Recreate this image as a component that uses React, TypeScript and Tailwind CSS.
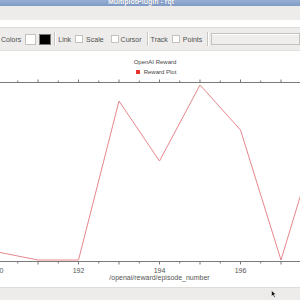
import React from "react";

const X0 = 78.5; // x of episode 192
const STEP = 40.5; // px per episode

const points: [number, number][] = [
  [190, 252],
  [191, 260],
  [192, 260],
  [193, 101],
  [194, 161],
  [195, 85],
  [196, 130],
  [197, 260],
  [198, 126],
];

const TOP = 77; // page y where the svg starts
const xOf = (v: number) => X0 + (v - 192) * STEP;

const Check = ({ className = "" }: { className?: string }) => (
  <span className={"w-[8px] h-[8px] bg-white border border-[#c4c2bf] shrink-0 " + className} />
);
const Sep = ({ className = "" }: { className?: string }) => (
  <span className={"w-[2px] h-[14px] border-l border-[#c9c7c3] border-r border-r-white shrink-0 " + className} />
);

export default function App() {
  const ticks: number[] = [];
  for (let i = -1; i < 17; i++) ticks.push(X0 + (i - 4) * (STEP / 2));
  const path = points.map(([v, y]) => `${xOf(v)},${y - TOP}`).join(" ");

  return (
    <div className="w-[300px] h-[300px] overflow-hidden bg-[#edecea] flex flex-col font-['Liberation_Sans',sans-serif] text-[#505050]">
      <div className="h-[6px] shrink-0 overflow-hidden bg-gradient-to-b from-[#98afd4] to-[#7f9ac6] flex justify-center">
        <span className="-mt-[3px] ml-[-18px] text-[7px] leading-[9px] font-bold text-white [text-shadow:0_0_1px_#4a5f88]">
          MultiplotPlugin - rqt
        </span>
      </div>
      <div className="h-[14px] shrink-0" />
      <div className="h-[7px] shrink-0 bg-white" />
      <div className="h-[23px] shrink-0 border-t border-[#dcdad6] flex items-center pl-[1px] text-[7px] leading-none">
        <span>Colors</span>
        <span className="ml-[4px] w-[11px] h-[11px] bg-white border border-[#c4c2bf] shrink-0" />
        <span className="ml-[3px] w-[12px] h-[11px] bg-black border border-[#777] shrink-0" />
        <Sep className="ml-[3px]" />
        <span className="ml-[2px]">Link</span>
        <Check className="ml-[4px]" />
        <span className="ml-[3px]">Scale</span>
        <Check className="ml-[7px]" />
        <span className="ml-[2px]">Cursor</span>
        <Sep className="ml-[5px]" />
        <span className="ml-[2px]">Track</span>
        <Check className="ml-[4px]" />
        <span className="ml-[3px]">Points</span>
        <Sep className="ml-[5px]" />
        <span className="ml-[2px] flex-1 h-[12px] border border-[#c4c2bf] bg-[#efeeec] shadow-[inset_0_1px_0_#fff]" />
      </div>
      <div className="h-[237px] shrink-0 bg-white border-t border-[#e2e0dc] flex flex-col">
        <div className="mt-[6px] h-[10px] flex items-center justify-center text-[6px] text-[#444] pl-[10px]">
          OpenAI Reward
        </div>
        <div className="h-[10px] flex items-center justify-center gap-[4px] text-[6px] text-[#444] pl-[12px]">
          <span className="w-[4px] h-[4px] bg-[#e8352c]" />
          <span>Reward Plot</span>
        </div>
        <svg width="300" height="210" className="shrink-0">
          <line x1="0" y1="5.5" x2="300" y2="5.5" stroke="#7a7a7a" strokeWidth="1" />
          {ticks.map((x, i) => (
            <line key={"t" + i} x1={x} y1={i % 2 ? 2.5 : 3.5} x2={x} y2="5.5" stroke="#7a7a7a" strokeWidth="1" />
          ))}
          <polyline points={path} fill="none" stroke="#e6868c" strokeWidth="1" />
          <line x1="0" y1="184.5" x2="300" y2="184.5" stroke="#7a7a7a" strokeWidth="1" />
          {ticks.map((x, i) => (
            <line key={"b" + i} x1={x} y1="184.5" x2={x} y2={i % 2 ? 187.5 : 186.5} stroke="#7a7a7a" strokeWidth="1" />
          ))}
          {[190, 192, 194, 196].map((v) => (
            <text key={v} x={xOf(v)} y="196" textAnchor="middle" fontSize="7" fill="#555" fontFamily="Liberation Sans, sans-serif">
              {v}
            </text>
          ))}
          <text x="159.5" y="203" textAnchor="middle" fontSize="7" fill="#555" fontFamily="Liberation Sans, sans-serif">
            /openai/reward/episode_number
          </text>
        </svg>
      </div>
      <div className="flex-1 border-t border-[#dedcd8] relative">
        <svg width="6" height="8" viewBox="0 0 6 8" className="absolute left-[271px] top-[2px]">
          <path d="M0.5 0.5 L0.5 6.5 L2 5 L3.2 7.5 L4.2 7 L3 4.6 L5 4.6 Z" fill="#111" stroke="#fff" strokeWidth="0.5" />
        </svg>
      </div>
    </div>
  );
}
